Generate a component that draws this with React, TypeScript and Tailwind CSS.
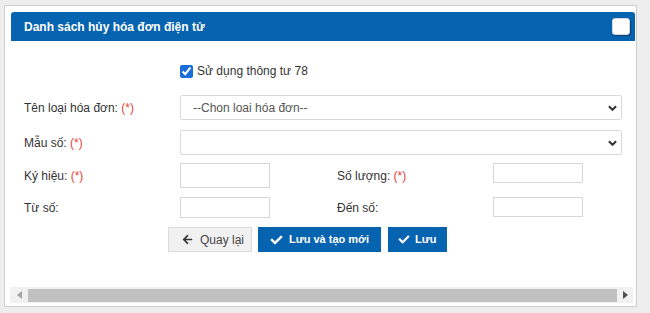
import { FaArrowLeft, FaCheck } from 'react-icons/fa';

const Req = () => <span className="text-[#e4433d]">(*)</span>;

const SelectBox = ({ placeholder }: { placeholder?: string }) => (
  <div className="relative h-[25px] w-[442px]">
    <select
      defaultValue=""
      className="h-full w-full appearance-none rounded-[2px] border border-[#dadada] bg-white pl-[12px] text-[12px] text-[#555] outline-none"
    >
      <option value="">{placeholder ?? ''}</option>
    </select>
    <svg
      className="pointer-events-none absolute right-[5px] top-[10px]"
      width="9"
      height="6"
      viewBox="0 0 10 6"
    >
      <path d="M1 1l4 4 4-4" fill="none" stroke="#333" strokeWidth="2.2" />
    </svg>
  </div>
);

const TextBox = ({ className }: { className: string }) => (
  <input
    type="text"
    className={`w-[90px] border border-[#d6d6d6] bg-white px-1 text-[12px] outline-none ${className}`}
  />
);

export default function App() {
  return (
    <div className="h-[313px] w-[650px] overflow-hidden bg-[#eeeeee] pl-[4px] pt-[5px] font-['Liberation_Sans',Arial,sans-serif] text-[12px] text-[#333]">
      <div className="flex h-[302px] w-[633px] flex-col border border-[#cfcfcf] bg-white">
        {/* header */}
        <div className="ml-[6px] mr-px mt-[6px] flex h-[29px] items-center justify-between rounded-t-[3px] bg-[#0663b0] pl-[13px] pr-[5px]">
          <span className="text-[12px] font-bold text-white">Danh sách hủy hóa đơn điện tử</span>
          <button
            type="button"
            aria-label="Đóng"
            className="h-[17px] w-[18px] rounded-[3px] border border-[#d8d8d8] bg-white shadow-[1px_1px_1px_rgba(0,0,0,0.35)]"
          />
        </div>

        {/* body */}
        <div className="ml-[6px] flex flex-col pl-[13px]">
          <label className="ml-[156px] mt-[20px] flex h-[20px] items-center gap-[4px]">
            <input type="checkbox" defaultChecked className="m-0 h-[13px] w-[13px] accent-[#1a6fdc]" />
            <span>Sử dụng thông tư 78</span>
          </label>

          <div className="mt-[14px] flex h-[25px] items-center">
            <span className="w-[156px]">
              Tên loại hóa đơn: <Req />
            </span>
            <SelectBox placeholder="--Chon loai hóa đơn--" />
          </div>

          <div className="mt-[10px] flex h-[25px] items-center">
            <span className="w-[156px]">
              Mẫu số: <Req />
            </span>
            <SelectBox />
          </div>

          <div className="mt-[8px] flex h-[25px] items-center">
            <span className="w-[156px]">
              Ký hiệu: <Req />
            </span>
            <TextBox className="h-[25px]" />
            <span className="ml-[67px] w-[156px]">
              Số lượng: <Req />
            </span>
            <TextBox className="h-[20px] self-start" />
          </div>

          <div className="mt-[9px] flex h-[21px] items-center">
            <span className="w-[156px]">Từ số:</span>
            <TextBox className="h-[21px]" />
            <span className="ml-[67px] w-[156px]">Đến số:</span>
            <TextBox className="h-[20px] self-start" />
          </div>

          <div className="ml-[144px] mt-[9px] flex h-[25px] items-stretch">
            <button
              type="button"
              className="flex w-[84px] items-center gap-[7px] border border-[#dcdcdc] bg-[#f1f1f1] pl-[13px] text-[12px] text-[#444]"
            >
              <FaArrowLeft className="h-[11px] w-[11px] text-[#333]" />
              Quay lại
            </button>
            <button
              type="button"
              className="ml-[6px] flex w-[123px] items-center gap-[6px] bg-[#0663b0] pl-[12px] text-[11px] font-bold text-white"
            >
              <FaCheck className="h-[12px] w-[13px]" />
              Lưu và tạo mới
            </button>
            <button
              type="button"
              className="ml-[7px] flex w-[59px] items-center gap-[5px] bg-[#0663b0] pl-[10px] text-[11px] font-bold text-white"
            >
              <FaCheck className="h-[11px] w-[12px]" />
              Lưu
            </button>
          </div>
        </div>

        {/* horizontal scrollbar */}
        <div className="ml-[5px] mr-[3px] mt-[35px] flex h-[16px] items-center bg-[#f1f1f1]">
          <div className="flex w-[18px] items-center justify-center">
            <svg width="5" height="8" viewBox="0 0 5 8">
              <path d="M5 0L0 4l5 4z" fill="#a3a3a3" />
            </svg>
          </div>
          <div className="h-[13px] flex-1 bg-[#c1c1c1]" />
          <div className="flex w-[16px] items-center justify-center">
            <svg width="5" height="8" viewBox="0 0 5 8">
              <path d="M0 0l5 4-5 4z" fill="#505050" />
            </svg>
          </div>
        </div>
      </div>
    </div>
  );
}
